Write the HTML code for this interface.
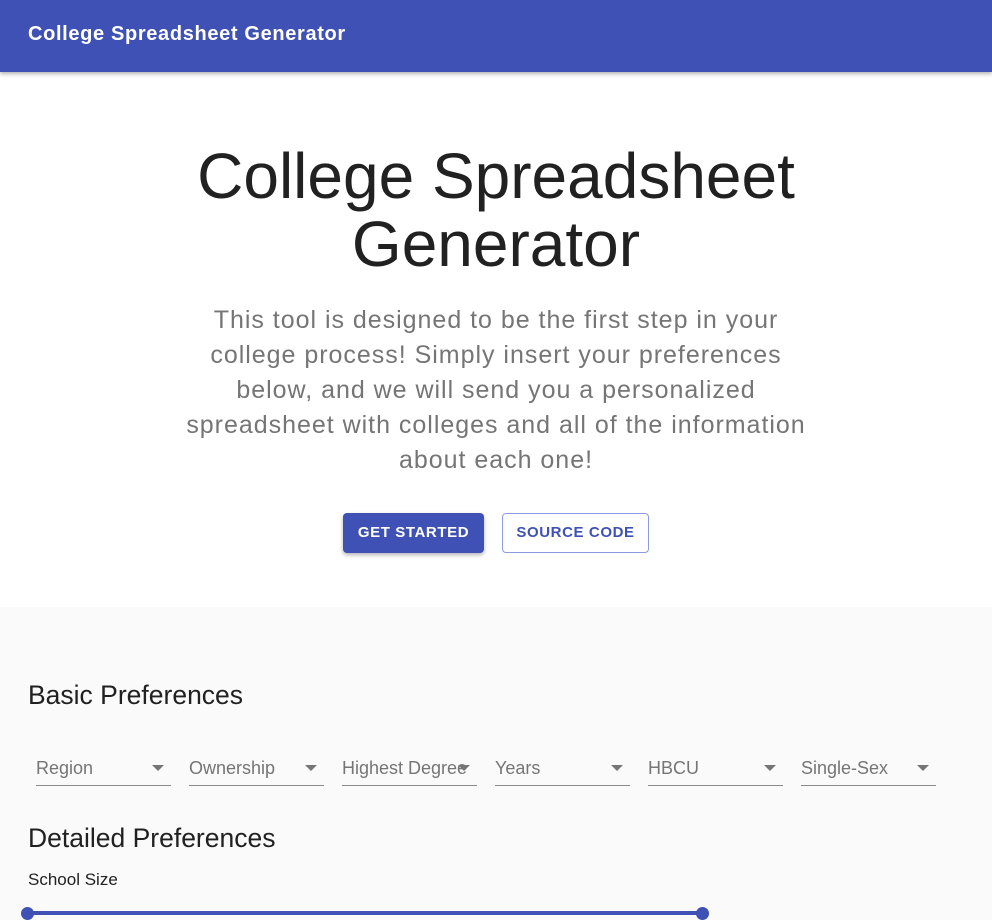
<!DOCTYPE html>
<html><head><meta charset="utf-8"><style>
body{margin:0;width:992px;height:915px;overflow:hidden;font-family:"Liberation Sans",sans-serif;background:#fafafa;position:relative}
.bar{position:absolute;left:0;top:0;width:992px;height:72px;background:#3f51b5;box-shadow:0 2px 4px rgba(0,0,0,.3);z-index:2}
.bar span{position:absolute;left:28px;top:23px;color:#fff;font-size:20px;font-weight:bold;letter-spacing:0.65px}
.hero{position:absolute;left:0;top:72px;width:992px;height:535px;background:#fff}
h1{position:absolute;left:0;width:992px;top:70px;margin:0;text-align:center;font-weight:300;font-size:64px;line-height:68px;color:#212121}
.p{position:absolute;left:100px;width:792px;top:231px;text-align:center;font-size:25px;line-height:35px;color:#757575;letter-spacing:0.98px}
.btn{position:absolute;top:441px;height:40px;box-sizing:border-box;border-radius:4px;font-size:15px;letter-spacing:.6px;font-weight:bold;line-height:40px;text-align:center}
.b1{left:343px;width:141px;background:#3f51b5;color:#fff;box-shadow:0 2px 4px rgba(0,0,0,.3)}
.b2{left:502px;width:147px;border:1px solid #8c9ae0;color:#3f51b5;line-height:38px}
h2{position:absolute;margin:0;font-weight:400;font-size:26.5px;color:#212121;left:28px}
.sel{position:absolute;top:755px;width:135px;height:30px;border-bottom:1px solid #8a8a8a;color:#757575;font-size:18px}
.sel span{position:absolute;left:0;top:3px;white-space:nowrap}
.sel i{position:absolute;right:7px;top:10px;border-left:6px solid transparent;border-right:6px solid transparent;border-top:6px solid #757575}
</style></head><body>
<div class="bar"><span>College Spreadsheet Generator</span></div>
<div class="hero">
<h1>College Spreadsheet<br>Generator</h1>
<div class="p">This tool is designed to be the first step in your<br>college process! Simply insert your preferences<br>below, and we will send you a personalized<br>spreadsheet with colleges and all of the information<br>about each one!</div>
<div class="btn b1">GET STARTED</div>
<div class="btn b2">SOURCE CODE</div>
</div>
<h2 style="top:680px">Basic Preferences</h2>
<div class="sel" style="left:36px"><span>Region</span><i></i></div>
<div class="sel" style="left:189px"><span>Ownership</span><i></i></div>
<div class="sel" style="left:342px"><span>Highest Degree</span><i></i></div>
<div class="sel" style="left:495px"><span>Years</span><i></i></div>
<div class="sel" style="left:648px"><span>HBCU</span><i></i></div>
<div class="sel" style="left:801px"><span>Single-Sex</span><i></i></div>
<h2 style="top:823px">Detailed Preferences</h2>
<div style="position:absolute;left:28px;top:870px;font-size:17px;color:#212121">School Size</div>
<div style="position:absolute;left:27px;top:911px;width:676px;height:4px;background:#3f51b5"></div>
<div style="position:absolute;left:21px;top:907px;width:13px;height:13px;border-radius:50%;background:#3f51b5"></div>
<div style="position:absolute;left:696px;top:907px;width:13px;height:13px;border-radius:50%;background:#3f51b5"></div>
</body></html>
